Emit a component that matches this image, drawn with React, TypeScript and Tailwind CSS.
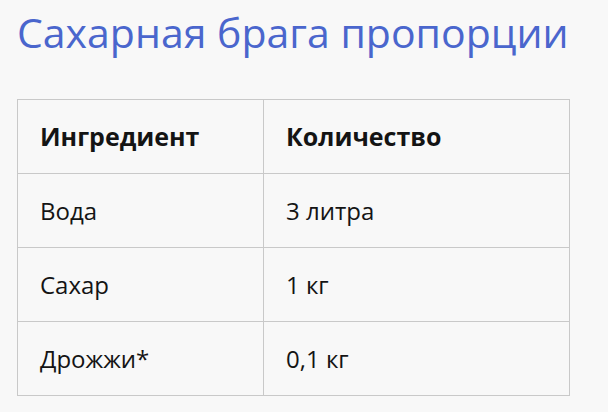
import React from 'react';

const rows = [
  { name: 'Вода', amount: '3 литра' },
  { name: 'Сахар', amount: '1 кг' },
  { name: 'Дрожжи*', amount: '0,1 кг' },
];

const App = () => {
  return (
    <div className="h-[412px] w-[608px] overflow-hidden bg-[#f8f8f8] pl-[17px] pt-[8px] font-['Open_Sans',sans-serif] text-[#141414]">
      <h1 className="text-[41px] leading-[48px] text-[#4a66cd]">Сахарная брага пропорции</h1>
      <table className="mt-[43px] w-[553px] border-collapse">
        <thead>
          <tr className="h-[74px]">
            <th className="w-[246px] border border-[#c9c9c9] pl-[22px] text-left text-[25px] font-bold">Ингредиент</th>
            <th className="border border-[#c9c9c9] pl-[22px] text-left text-[25px] font-bold">Количество</th>
          </tr>
        </thead>
        <tbody>
          {rows.map((row) => (
            <tr key={row.name} className="h-[74px]">
              <td className="border border-[#c9c9c9] pl-[22px] text-[24px]">{row.name}</td>
              <td className="border border-[#c9c9c9] pl-[22px] text-[24px]">{row.amount}</td>
            </tr>
          ))}
        </tbody>
      </table>
    </div>
  );
};

export default App;
